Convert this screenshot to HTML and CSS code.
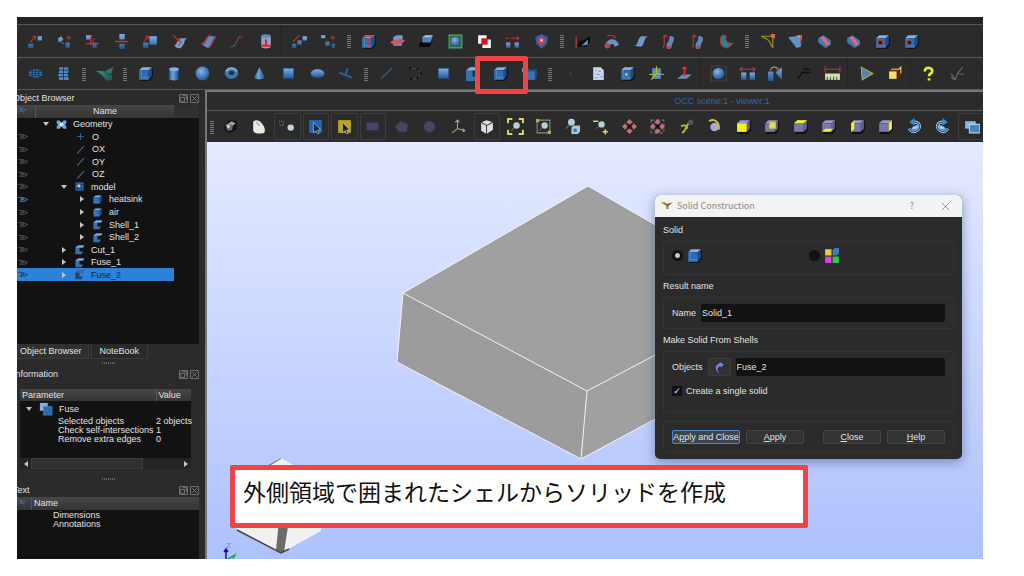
FILE: index.html
```html
<!DOCTYPE html>
<html lang="ja">
<head>
<meta charset="utf-8">
<title>Solid Construction</title>
<link rel="stylesheet" href="styles.css">
</head>
<body>
<svg class="defs" aria-hidden="true">
  <defs>
    <linearGradient id="gb" x1="0" y1="0" x2="0" y2="1"><stop offset="0" stop-color="#7fb0e6"/><stop offset="1" stop-color="#1f5596"/></linearGradient>
    <linearGradient id="gc" x1="0" y1="0" x2="1" y2="0"><stop offset="0" stop-color="#2c64a5"/><stop offset=".4" stop-color="#6ea3dc"/><stop offset="1" stop-color="#1c4880"/></linearGradient>
    <radialGradient id="gs" cx=".4" cy=".35" r=".7"><stop offset="0" stop-color="#86b6ec"/><stop offset="1" stop-color="#1b4f8f"/></radialGradient>
    <linearGradient id="gt" x1="0" y1="0" x2="1" y2="1"><stop offset="0" stop-color="#3f9c8c"/><stop offset="1" stop-color="#175248"/></linearGradient>
  </defs>
  <symbol id="box" viewBox="0 0 16 16"><path d="M3 6l3-3h9v8l-3 4H3z" fill="#0b1420"/><path d="M2 5l3-3h9l-3 3z" fill="#85b2e2"/><path d="M11 5l3-3v8l-3 4z" fill="#1d4c86"/><path d="M2 5h9v9H2z" fill="#2f6db3"/><path d="M4 5v7h7" stroke="#6f9bcd" stroke-width=".6" fill="none"/></symbol>
  <symbol id="cyl" viewBox="0 0 16 16"><path d="M4 4v9c0 2 9 2 9 0V4z" fill="url(#gc)"/><ellipse cx="8.500" cy="4" rx="4.500" ry="1.800" fill="#7fb0e6"/></symbol>
  <symbol id="sph" viewBox="0 0 16 16"><circle cx="8" cy="8" r="6.500" fill="url(#gs)"/></symbol>
  <symbol id="tor" viewBox="0 0 16 16"><ellipse cx="8" cy="7.500" rx="4.500" ry="3.700" fill="none" stroke="#3c74b5" stroke-width="3.800"/><path d="M3 6c2-4 8-4 10 0" fill="none" stroke="#8ab5e4" stroke-width="1.500"/></symbol>
  <symbol id="cone" viewBox="0 0 16 16"><path d="M8 2l5 10c-2 2-8 2-10 0z" fill="url(#gc)"/></symbol>
  <symbol id="rect" viewBox="0 0 16 16"><path d="M3 3h10v10H3z" fill="url(#gb)" stroke="#173f70" stroke-width=".6"/></symbol>
  <symbol id="disk" viewBox="0 0 16 16"><ellipse cx="8" cy="8" rx="6.500" ry="4" fill="url(#gb)"/></symbol>
  <symbol id="tpipe" viewBox="0 0 16 16"><path d="M2 7l12 5M8 10l2-7" stroke="#285d99" stroke-width="2" fill="none"/></symbol>
  <symbol id="line" viewBox="0 0 16 16"><path d="M3 13L13 3" stroke="#315f92" stroke-width="1.200"/></symbol>
  <symbol id="axis" viewBox="0 0 16 16"><path d="M3 14L13 3" stroke="#5b6470" stroke-width="1.500"/></symbol>
  <symbol id="wire" viewBox="0 0 16 16"><path d="M3 3l7 1 3 4-3 4-6 2" stroke="#354f70" fill="none"/><g fill="#0a0a0a"><path d="M2 2h2v2H2zM9 3h2v2H9zM12 7h2v2h-2zM9 11h2v2H9zM3 12h2v2H3z"/></g></symbol>
  <symbol id="mesh" viewBox="0 0 16 16"><ellipse cx="8" cy="8" rx="6.500" ry="4" fill="#3a6fae"/><path d="M1 8h14M3 6h10M3 10h10M5 4v8M8 4v8M11 4v8" stroke="#14263c" stroke-width=".6"/></symbol>
  <symbol id="mesh3" viewBox="0 0 16 16"><path d="M4 2h8l1 3-1 4 1 5H4L3 9l1-4z" fill="#5087c4"/><path d="M3 5h10M3 8h10M3 11h10M8 2v12" stroke="#152a45" stroke-width=".7"/></symbol>
  <symbol id="surf" viewBox="0 0 20 16"><path d="M1 5c3-1 6 1 9 0s5-3 9-4c-3 4-2 8-2 13-3 1-5 1-7-1-2-3-5-6-9-8z" fill="url(#gt)"/><path d="M10 5c1 3 3 4 7 3" stroke="#123c36" fill="none"/></symbol>
  <symbol id="tr1" viewBox="0 0 16 16"><path d="M1 10h5v4H1zM10 3h4v4h-4z" fill="url(#gb)"/><path d="M3 9l5-6M5 3h3v3" stroke="#c4303c" fill="none"/></symbol>
  <symbol id="tr2" viewBox="0 0 16 16"><path d="M2 5l3-2 2 3-3 3-2-1zM9 9h4v5H9z" fill="url(#gb)"/><path d="M12 2v5M9.500 4.500h5" stroke="#c4303c"/><path d="M6 9h1v1H6z" fill="#aaa"/></symbol>
  <symbol id="tr3" viewBox="0 0 16 16"><path d="M2 2h5v4H2zM8 9h4v5H8z" fill="url(#gb)"/><path d="M6 3v8M2 10h12M10 5l-4 6" stroke="#c4303c" fill="none"/></symbol>
  <symbol id="tr4" viewBox="0 0 16 16"><path d="M6 1h5v5H6zM6 10h5v5H6z" fill="url(#gb)"/><path d="M2 8h12" stroke="#c4303c" stroke-width="1.400"/></symbol>
  <symbol id="tr5" viewBox="0 0 16 16"><path d="M1 9h5v5H1zM7 3h7v8H7z" fill="url(#gb)"/><path d="M2 8l4-5M3 3h3v3" stroke="#c4303c" fill="none"/></symbol>
  <symbol id="tr6" viewBox="0 0 16 16"><path d="M3 12c3-1 3-7 6-7h6c-3 1-2 7-6 9-2 1-4 0-6-2z" fill="#7b9ccb"/><path d="M2 2l6 6 1-3M7 12l3-4" stroke="#c4303c" fill="none"/></symbol>
  <symbol id="tr7" viewBox="0 0 16 16"><path d="M2 11c4 0 3-7 7-8h6c-4 1-3 10-8 11z" fill="#5d8bc6"/><path d="M1 10c5 1 4-7 9-8M7 14c5 0 4-8 8-10" stroke="#c4303c" fill="none" stroke-width="1.300"/></symbol>
  <symbol id="curve" viewBox="0 0 16 16"><path d="M2 13c8 0 4-9 12-10" stroke="#46617f" fill="none"/><path d="M8 8c1-4 2-5 6-5" stroke="#8c2630" fill="none"/></symbol>
  <symbol id="cylr" viewBox="0 0 16 16"><path d="M4 3v10c0 2 9 2 9 0V3z" fill="#8da7c4"/><ellipse cx="8.500" cy="3" rx="4.500" ry="1.800" fill="#5f8fc4"/><path d="M4 12h9M8.500 6v7" stroke="#e11f30" stroke-width="2"/></symbol>
  <symbol id="arr1" viewBox="0 0 16 16"><path d="M1 10h4v4H1zM6 7h4v4H6zM11 3h4v4h-4z" fill="url(#gb)"/><path d="M2 8l6-6" stroke="#c4303c"/></symbol>
  <symbol id="arr2" viewBox="0 0 16 16"><path d="M1 2h4v3H1zM5 8h4v4H5zM11 10h3v4h-3z" fill="url(#gb)"/><path d="M12 2v5M9.500 4.500h5" stroke="#c4303c"/></symbol>
  <symbol id="boxr" viewBox="0 0 16 16"><use href="#box"/><path d="M3 5l3-2h7M8 5v9M10 5l3-3" stroke="#b9434a" fill="none" stroke-width="1.300"/></symbol>
  <symbol id="slice" viewBox="0 0 16 16"><path d="M4 4l3-2h6l-1 10H4z" fill="#6e9bd0"/><path d="M1 9c3-3 10-4 14-2-2 4-10 5-14 2z" fill="#d4525a"/></symbol>
  <symbol id="slice2" viewBox="0 0 16 16"><path d="M1 10l3-3h10l-3 6H1z" fill="#060606"/><path d="M4 4l3-2h7l-2 7H4z" fill="#4d82bd"/><path d="M4 4l3-2h7l-2 2z" fill="#9fc3ec"/></symbol>
  <symbol id="green" viewBox="0 0 16 16"><path d="M2 2h12v12H2z" fill="#256b43" stroke="#4faf70"/><circle cx="8" cy="8" r="4.500" fill="url(#gs)"/></symbol>
  <symbol id="common" viewBox="0 0 16 16"><path d="M2 2h8v8H2zM6 6h8v8H6z" fill="#f3f3f5"/><path d="M5 5h6v6H5z" fill="#e01020"/></symbol>
  <symbol id="expl" viewBox="0 0 16 16"><path d="M2 9h4v5H2zM10 9h4v5h-4z" fill="url(#gb)"/><path d="M1 5h4M7 5h7M12 3l2 2-2 2" stroke="#c4303c" fill="none"/></symbol>
  <symbol id="shield" viewBox="0 0 16 16"><path d="M2 4l6-3 6 3-1 6-5 5-5-5z" fill="#2b62b0"/><path d="M5 5l3-2 3 2v4l-3 3-3-3z" fill="#d63d55"/><path d="M7 6h2v2H7z" fill="#fff"/></symbol>
  <symbol id="ext" viewBox="0 0 16 16"><path d="M3 13h8l4-4V3L9 7H5z" fill="#090909"/><path d="M7 12l6-6v5z" fill="#648ec0"/><path d="M2 14V3" stroke="#b93642" stroke-width="1.200"/></symbol>
  <symbol id="rev" viewBox="0 0 16 16"><path d="M2 12C3 5 12 3 15 11l-4 2c-1-4-4-4-5 1z" fill="#7093c0"/><circle cx="4" cy="12" r="2.500" fill="#b9434a"/><path d="M4 3c4-2 6-1 8 2" stroke="#c4303c" fill="none"/></symbol>
  <symbol id="sheet" viewBox="0 0 16 16"><path d="M2 12c4 0 3-8 7-9h6c-4 1-3 9-7 10z" fill="#7394c5"/></symbol>
  <symbol id="pipe" viewBox="0 0 16 16"><path d="M9 3c5-1 5 4 3 6-1 2-1 6-4 6s-2-6 0-7z" fill="#6386b8"/><path d="M3 14c3-4-1-7 2-12M3 4l2-2 2 2" stroke="#b93642" fill="none"/><ellipse cx="9" cy="13.500" rx="2" ry="1.500" fill="#b9434a"/></symbol>
  <symbol id="pie" viewBox="0 0 16 16"><path d="M4 2C0 8 3 14 9 14l5-4-5-1-2-3 1-3z" fill="#2c7f8c" stroke="#a93843"/></symbol>
  <symbol id="fil1" viewBox="0 0 16 16"><path d="M2 3h11v11M3 4c5 1 8 4 9 9" stroke="#a89528" fill="none"/><path d="M11 1h4v4h-3z" fill="#e06a3a"/></symbol>
  <symbol id="fil2" viewBox="0 0 16 16"><path d="M1 4l13-2-1 11-4 1z" fill="#5f91cc"/><path d="M9 2h5v4" fill="#d9a078"/><path d="M13 2v8" stroke="#c4303c"/></symbol>
  <symbol id="fil3" viewBox="0 0 16 16"><path d="M2 5l5-3 7 5v4l-5 3-7-5z" fill="#4379b7"/><path d="M4 4l3-1 6 7-3 2z" fill="#e36b70"/></symbol>
  <symbol id="boxs" viewBox="0 0 16 16"><use href="#box"/><path d="M4 7h4v4H4z" fill="#17212e" stroke="#a83640"/></symbol>
  <symbol id="pt" viewBox="0 0 16 16"><path d="M7 7h2v2H7z" fill="#28496f"/></symbol>
  <symbol id="page" viewBox="0 0 16 16"><path d="M3 2h7l3 3v9H3z" fill="#c7d6ec"/><path d="M5 5h1M8 6h2M6 9h3M10 11h2M5 12h2" stroke="#6e8fc2"/></symbol>
  <symbol id="boxy" viewBox="0 0 16 16"><use href="#box"/><path d="M6 8h2v2H6z" fill="#e4ef52"/></symbol>
  <symbol id="boxa" viewBox="0 0 16 16"><path d="M4 3h8v10H4z" fill="#5c8fc5"/><path d="M8 1v7l7 1M8 8l-5 6M1 9h7" stroke="#b8b52b" fill="none"/></symbol>
  <symbol id="norm" viewBox="0 0 16 16"><path d="M1 13l5-4h9l-5 4z" fill="#5f8fc4"/><path d="M8 11V2M6 4l2-2 2 2" stroke="#d43342" fill="none" stroke-width="1.400"/></symbol>
  <symbol id="sphb" viewBox="0 0 16 16"><path d="M1 1h14v14H1z" fill="none" stroke="#454545"/><circle cx="8" cy="8" r="5.500" fill="url(#gs)"/></symbol>
  <symbol id="dist" viewBox="0 0 16 16"><path d="M2 7h5v7H2zM10 7h5v7h-5z" fill="url(#gb)"/><path d="M1 4h14M3 2L1 4l2 2M13 2l2 2-2 2" stroke="#cf3039" fill="none"/></symbol>
  <symbol id="ang" viewBox="0 0 16 16"><path d="M1 6h5v9H1zM8 7l6-5v12z" fill="url(#gb)"/><path d="M3 5c2-4 5-4 8-1" stroke="#bdbd49" fill="none"/><path d="M10 2l2 3H8z" fill="#d43342"/></symbol>
  <symbol id="cut" viewBox="0 0 16 16"><path d="M2 13l4-6h8M7 4h6" stroke="#111" stroke-width="1.400" fill="none"/></symbol>
  <symbol id="ruler" viewBox="0 0 16 16"><path d="M1 8h14v6H1z" fill="#d2dfad"/><path d="M3 11v3M6 11v3M9 11v3M12 11v3" stroke="#4c5a3a"/><path d="M1 1v6M15 1v6M1 4h14" stroke="#c4303c"/></symbol>
  <symbol id="tri" viewBox="0 0 16 16"><path d="M3 2l11 6-10 6z" fill="#5c83ad" stroke="#a4b348"/></symbol>
  <symbol id="boxye" viewBox="0 0 16 16"><path d="M2 6l3-4h9l-1 8-4 4H2z" fill="#641f1c"/><path d="M2 6h7v7H2z" fill="#eee85a"/><path d="M4 4h7l2-2v6" stroke="#ddd94e" fill="none"/></symbol>
  <symbol id="help" viewBox="0 0 16 16"><path d="M4.500 6c0-5 7.500-4 7 0-.3 2-3 2-3 4.500M8.500 12.500v2" stroke="#f1ec26" stroke-width="2.600" fill="none"/></symbol>
  <symbol id="tool" viewBox="0 0 16 16"><path d="M2 8l4 6 2-6 6 1M8 8l5-6M2 11l3 3" stroke="#6b6b6b" fill="none"/></symbol>
  <symbol id="dump" viewBox="0 0 16 16"><path d="M2 7l5-5 7 1v7l-6 4-5-2z" fill="#111"/><path d="M3 7l6-4 4 2-5 4z" fill="#9aa09e"/><circle cx="7" cy="9" r="3" fill="#66706d"/><circle cx="6" cy="8" r="1.300" fill="#dde"/></symbol>
  <symbol id="mouse" viewBox="0 0 16 16"><path d="M3 4c1-3 6-2 8 1 3 3 4 8 2 9-3 1-9 1-10-2z" fill="#e7e9e3"/><path d="M6 4l3 3" stroke="#999"/></symbol>
  <symbol id="dots" viewBox="0 0 16 16"><path d="M0 3h4v4H0z" fill="none" stroke="#777" stroke-dasharray="1 1"/><circle cx="11" cy="9" r="3" fill="#bfd9da"/></symbol>
  <symbol id="selb" viewBox="0 0 16 16"><path d="M2 2h12v12H2z" fill="#1e69b7"/><path d="M6 4l7 7-3 .3 1.500 3-1.500.7-1.500-3L6 14z" fill="#202437" stroke="#b8b7bd" stroke-width=".7"/></symbol>
  <symbol id="sely" viewBox="0 0 16 16"><path d="M2 2h12v12H2z" fill="#bba51d"/><path d="M6 4l7 7-3 .3 1.500 3-1.500.7-1.500-3L6 14z" fill="#202437" stroke="#c6bfa0" stroke-width=".7"/></symbol>
  <symbol id="prect" viewBox="0 0 16 16"><path d="M2 4h12v8H2z" fill="#474665" stroke="#302f4b"/></symbol>
  <symbol id="ppoly" viewBox="0 0 16 16"><path d="M2 8l5-5 7 3-1 7H5z" fill="#464564"/></symbol>
  <symbol id="pcirc" viewBox="0 0 16 16"><circle cx="8" cy="8" r="5.200" fill="#464564"/></symbol>
  <symbol id="axes" viewBox="0 0 16 16"><path d="M7 2v8l7 2M7 10l-5 4M5 4l2-2 2 2M12 10l2 2-2 1" stroke="#a7a58a" fill="none"/></symbol>
  <symbol id="wbox" viewBox="0 0 16 16"><path d="M3 4l5-2 6 2v7l-6 4-5-3z" fill="#dedede"/><path d="M3 4l5 3 6-3M8 7v8" stroke="#444" fill="none"/></symbol>
  <symbol id="fit" viewBox="0 0 16 16"><path d="M1 5V1h4M11 1h4v4M15 11v4h-4M5 15H1v-4" stroke="#d9d76a" stroke-width="1.800" fill="none"/><path d="M4 12l4-4" stroke="#6a5a45" stroke-width="1.500"/><circle cx="9" cy="7" r="3" fill="#b5cfd4"/></symbol>
  <symbol id="fitr" viewBox="0 0 16 16"><path d="M2 2h12v12H2z" stroke="#8b8b87" fill="none"/><path d="M1 1h3v3H1zM12 12h3v3h-3z" fill="#b9b43c"/><circle cx="9" cy="7" r="3" fill="#b5cfd4"/><path d="M4 12l3-3" stroke="#6a5a45"/></symbol>
  <symbol id="zoomb" viewBox="0 0 16 16"><path d="M2 10l4-5" stroke="#6a5a45" stroke-width="1.500"/><circle cx="7" cy="4" r="3.200" fill="#b5cfd4"/><path d="M7 9l2-2h6v6l-2 2H7z" fill="#a9c8df"/><path d="M9 10h3v3H9z" fill="#3777af"/></symbol>
  <symbol id="zoomp" viewBox="0 0 16 16"><path d="M1 3h5M10 13h5M12.500 10.500v5" stroke="#e0d847" stroke-width="1.500"/><path d="M4 10l5-4" stroke="#6a5a45"/><circle cx="9" cy="6" r="3" fill="#b5cfd4"/></symbol>
  <symbol id="pan" viewBox="0 0 16 16"><path d="M8 1l3 3-3 2-3-2zM8 15l3-3-3-2-3 2zM1 8l3-3 2 3-2 3zM15 8l-3-3-2 3 2 3z" fill="#c4707a"/><path d="M7 7h2v2H7z" fill="#060606"/></symbol>
  <symbol id="panf" viewBox="0 0 16 16"><path d="M2 2h12v12H2z" fill="none" stroke="#777" stroke-dasharray="3 2"/><use href="#pan"/></symbol>
  <symbol id="rotp" viewBox="0 0 16 16"><path d="M4 14c4-2 3-6 6-9M3 8c2-2 5-1 6 2" stroke="#c7ba38" stroke-width="1.800" fill="none"/><circle cx="12" cy="4" r="2.500" fill="#4b5765"/></symbol>
  <symbol id="rot" viewBox="0 0 16 16"><circle cx="8" cy="8.500" r="4" fill="#a7a8da"/><path d="M3 3c5-3 10 1 9 8" stroke="#cec23f" stroke-width="1.800" fill="none"/></symbol>
  <symbol id="cube" viewBox="0 0 16 16"><path d="M3 6l3-3h9v8l-3 4H3z" fill="#111"/><path d="M2 5l3-3h9l-3 3z" fill="#9998cd"/><path d="M11 5l3-3v8l-3 3z" fill="#62618f"/><path d="M2 5h9v8H2z" fill="#7978ab"/></symbol>
  <symbol id="vfront" viewBox="0 0 16 16"><use href="#cube"/><path d="M2 5h9v8H2z" fill="#f4f315"/></symbol>
  <symbol id="vback" viewBox="0 0 16 16"><use href="#cube"/><path d="M6 4h6v6H6z" fill="#e1df3c"/></symbol>
  <symbol id="vtop" viewBox="0 0 16 16"><use href="#cube"/><path d="M2 5l3-3h9l-3 3z" fill="#f4f315"/></symbol>
  <symbol id="vbot" viewBox="0 0 16 16"><use href="#cube"/><path d="M2 13l3-3h7l-2 3z" fill="#f4f315"/></symbol>
  <symbol id="vleft" viewBox="0 0 16 16"><use href="#cube"/><path d="M2 5l3-3v8l-3 3z" fill="#f4f315"/></symbol>
  <symbol id="vright" viewBox="0 0 16 16"><use href="#cube"/><path d="M11 5l3-3v8l-3 3z" fill="#f4f315"/></symbol>
  <symbol id="ccw" viewBox="0 0 16 16"><path d="M6 4c7-1 9 5 4 8-3 2-6 0-7-2M6 9c2 1 4 0 4-2" stroke="#a8cdf1" stroke-width="2.800" fill="none"/><path d="M6 4c7-1 9 5 4 8-3 2-6 0-7-2" stroke="#255a9d" stroke-width="1.300" fill="none"/><path d="M3 4l5-4v7z" fill="#2b91da"/></symbol>
  <symbol id="cw" viewBox="0 0 16 16"><path d="M10 4c-7-1-9 5-4 8 3 2 6 0 7-2M10 9C8 10 6 9 6 7" stroke="#a8cdf1" stroke-width="2.800" fill="none"/><path d="M10 4c-7-1-9 5-4 8 3 2 6 0 7-2" stroke="#255a9d" stroke-width="1.300" fill="none"/><path d="M13 4L8 0v7z" fill="#2b91da"/></symbol>
  <symbol id="clone" viewBox="0 0 16 16"><path d="M2 3h10v7H2z" fill="#86b7e5"/><path d="M6 6h10v8H6z" fill="#4b84c1" stroke="#add1f2"/></symbol>
  <symbol id="geo" viewBox="0 0 16 16"><path d="M1 2h4l3 3 3-3h4v4l-2 2 2 3v3h-4l-3-3-3 3H1v-3l2-3-2-2z" fill="#69acdf"/><circle cx="8" cy="8" r="2.500" fill="#d7edfa"/></symbol>
  <symbol id="plus" viewBox="0 0 16 16"><path d="M8 3v10M3 8h10" stroke="#315f92" stroke-width="1.500"/></symbol>
  <symbol id="model" viewBox="0 0 16 16"><path d="M2 2h12v12H2z" fill="#306fae"/><path d="M1 5h14M1 11h14M5 1v14M11 1v14" stroke="#11355e"/><path d="M5 5h4v4H5z" fill="#9ac7ee"/></symbol>
  <symbol id="shell" viewBox="0 0 16 16"><path d="M2 5l4-3h9l-2 3H8v6h5l-2 4H2z" fill="#3972b4"/><path d="M2 5l4-3h9l-2 3z" fill="#86b2e2"/></symbol>
  <symbol id="comp" viewBox="0 0 16 16"><path d="M1 3h6v4H1z" fill="#6c9ed6"/><path d="M5 6l2-2h8v7l-2 3H5z" fill="#1d4c86"/><path d="M5 6h8v8H5z" fill="#3972b4"/></symbol>
  <symbol id="fuse" viewBox="0 0 16 16"><path d="M1 1h9v9H1z" fill="#83b0e3"/><path d="M5 5h10v10H5z" fill="#2c6bb0" stroke="#528dca" stroke-width=".6"/></symbol>
  <symbol id="eye" viewBox="0 0 16 16"><path d="M1 5c5-1 9 0 14 3-4 3-8 4-12 2M6 5v5" stroke="currentColor" stroke-width="1.500" fill="none"/><circle cx="8" cy="7.500" r="2" fill="currentColor"/></symbol>
  <symbol id="float" viewBox="0 0 16 16"><path d="M1 1h14v14H1zM3 6h7v7H3zM6 3h7v7" fill="none" stroke="currentColor" stroke-width="1.400"/></symbol>
  <symbol id="close" viewBox="0 0 16 16"><path d="M1 1h14v14H1zM4 4l8 8M12 4l-8 8" fill="none" stroke="currentColor" stroke-width="1.400"/></symbol>
  <symbol id="logo" viewBox="0 0 16 16"><path d="M0 3l5 0 3 2 8-2-6 4v5H7V8z" fill="#a88123"/><path d="M8 6l7-2-6 4z" fill="#59491d"/></symbol>
  <symbol id="four" viewBox="0 0 16 16"><path d="M2 2h6v6H2z" fill="#f1ce2d"/><path d="M9 3l2-2h4v5l-2 2H9z" fill="#3a7abe"/><path d="M2 9h6v6H2z" fill="#d642e5"/><path d="M9 9h6v6H9z" fill="#35c44d"/></symbol>
  <symbol id="pick" viewBox="0 0 16 16"><path d="M14 4L9 1 3 6c-1 4 1 7 4 9l1-1C5 10 6 8 9 7l1 2z" fill="#7584cc" stroke="#182454"/></symbol>
</svg>

<main class="app">
  <div class="menu-edge"></div>
  <div class="toolbar" role="toolbar" aria-label="Operations">
    <button class="tb" aria-label="Translation"><svg><use href="#tr1"/></svg></button>
    <button class="tb" aria-label="Rotation"><svg><use href="#tr2"/></svg></button>
    <button class="tb" aria-label="Modify location"><svg><use href="#tr3"/></svg></button>
    <button class="tb" aria-label="Mirror"><svg><use href="#tr4"/></svg></button>
    <button class="tb" aria-label="Scale"><svg><use href="#tr5"/></svg></button>
    <button class="tb" aria-label="Offset"><svg><use href="#tr6"/></svg></button>
    <button class="tb" aria-label="Projection"><svg><use href="#tr7"/></svg></button>
    <button class="tb" aria-label="Curve extension"><svg><use href="#curve"/></svg></button>
    <button class="tb" aria-label="Cylinder projection"><svg><use href="#cylr"/></svg></button>
    <span class="sep"></span>
    <button class="tb" aria-label="Multi-translation"><svg><use href="#arr1"/></svg></button>
    <button class="tb" aria-label="Multi-rotation"><svg><use href="#arr2"/></svg></button>
    <span class="grip"></span>
    <button class="tb" aria-label="Partition"><svg><use href="#boxr"/></svg></button>
    <button class="tb" aria-label="Section"><svg><use href="#slice"/></svg></button>
    <button class="tb" aria-label="Archimede"><svg><use href="#slice2"/></svg></button>
    <button class="tb" aria-label="Shapes on shape"><svg><use href="#green"/></svg></button>
    <button class="tb" aria-label="Common"><svg><use href="#common"/></svg></button>
    <button class="tb" aria-label="Transfer"><svg><use href="#expl"/></svg></button>
    <button class="tb" aria-label="Shared shapes"><svg><use href="#shield"/></svg></button>
    <span class="grip"></span>
    <button class="tb" aria-label="Extrusion"><svg><use href="#ext"/></svg></button>
    <button class="tb" aria-label="Revolution"><svg><use href="#rev"/></svg></button>
    <button class="tb" aria-label="Filling"><svg><use href="#sheet"/></svg></button>
    <button class="tb" aria-label="Pipe"><svg><use href="#pipe"/></svg></button>
    <button class="tb" aria-label="Path"><svg><use href="#pipe"/></svg></button>
    <button class="tb" aria-label="Thickness"><svg><use href="#pie"/></svg></button>
    <span class="grip"></span>
    <button class="tb" aria-label="Fillet 1D"><svg><use href="#fil1"/></svg></button>
    <button class="tb" aria-label="Fillet 2D"><svg><use href="#fil2"/></svg></button>
    <button class="tb" aria-label="Fillet 3D"><svg><use href="#fil3"/></svg></button>
    <button class="tb" aria-label="Chamfer"><svg><use href="#fil3"/></svg></button>
    <button class="tb" aria-label="Extruded boss"><svg><use href="#boxs"/></svg></button>
    <button class="tb" aria-label="Extruded cut"><svg><use href="#boxs"/></svg></button>
    <span class="rest"></span>
  </div>
  <div class="toolbar second" role="toolbar" aria-label="Primitives">
    <button class="tb" aria-label="Mesh disk"><svg><use href="#mesh"/></svg></button>
    <button class="tb" aria-label="Mesh pipe"><svg><use href="#mesh3"/></svg></button>
    <span class="grip"></span>
    <button class="tb wide" aria-label="Smoothing surface"><svg><use href="#surf"/></svg></button>
    <span class="grip"></span>
    <button class="tb" aria-label="Box"><svg><use href="#box"/></svg></button>
    <button class="tb" aria-label="Cylinder"><svg><use href="#cyl"/></svg></button>
    <button class="tb" aria-label="Sphere"><svg><use href="#sph"/></svg></button>
    <button class="tb" aria-label="Torus"><svg><use href="#tor"/></svg></button>
    <button class="tb" aria-label="Cone"><svg><use href="#cone"/></svg></button>
    <button class="tb" aria-label="Rectangle"><svg><use href="#rect"/></svg></button>
    <button class="tb" aria-label="Disk"><svg><use href="#disk"/></svg></button>
    <button class="tb" aria-label="Pipe T-shape"><svg><use href="#tpipe"/></svg></button>
    <span class="grip"></span>
    <button class="tb" aria-label="Edge"><svg><use href="#line"/></svg></button>
    <button class="tb" aria-label="Wire"><svg><use href="#wire"/></svg></button>
    <button class="tb" aria-label="Face"><svg><use href="#rect"/></svg></button>
    <button class="tb" aria-label="Shell"><svg><use href="#shell"/></svg></button>
    <button class="tb marked" aria-label="Build solid"><svg><use href="#box"/></svg></button>
    <button class="tb" aria-label="Compound"><svg><use href="#comp"/></svg></button>
    <span class="grip"></span>
    <button class="tb" aria-label="Point"><svg><use href="#pt"/></svg></button>
    <button class="tb" aria-label="Properties"><svg><use href="#page"/></svg></button>
    <button class="tb" aria-label="Center of mass"><svg><use href="#boxy"/></svg></button>
    <button class="tb" aria-label="Inertia"><svg><use href="#boxa"/></svg></button>
    <button class="tb" aria-label="Normal"><svg><use href="#norm"/></svg></button>
    <span class="sep"></span>
    <button class="tb" aria-label="Bounding box"><svg><use href="#sphb"/></svg></button>
    <button class="tb" aria-label="Minimum distance"><svg><use href="#dist"/></svg></button>
    <button class="tb" aria-label="Angle"><svg><use href="#ang"/></svg></button>
    <button class="tb" aria-label="Annotation"><svg><use href="#cut"/></svg></button>
    <button class="tb" aria-label="Dimensions"><svg><use href="#ruler"/></svg></button>
    <span class="sep"></span>
    <button class="tb" aria-label="Tolerance"><svg><use href="#tri"/></svg></button>
    <button class="tb" aria-label="Free boundaries"><svg><use href="#boxye"/></svg></button>
    <span class="sep"></span>
    <button class="tb" aria-label="What is"><svg><use href="#help"/></svg></button>
    <button class="tb" aria-label="Check shape"><svg><use href="#tool"/></svg></button>
    <span class="cutoff"><svg><use href="#line"/></svg></span>
  </div>

  <div class="work">
    <aside class="side">
      <section class="dock browser">
        <h2 class="dock-title"><span class="clip">Object Browser</span><button aria-label="Float"><svg><use href="#float"/></svg></button><button aria-label="Close panel"><svg><use href="#close"/></svg></button></h2>
        <div class="tree-head"><span class="eye on"><svg><use href="#eye"/></svg></span><span class="name">Name</span><span class="blank"></span></div>
        <div class="tree-body">
          <ul class="tree">
            <li class="l0"><i class="ar down"></i><svg><use href="#geo"/></svg>Geometry</li>
            <li class="l2"><svg class="eye"><use href="#eye"/></svg><svg><use href="#plus"/></svg>O</li>
            <li class="l2"><svg class="eye"><use href="#eye"/></svg><svg><use href="#axis"/></svg>OX</li>
            <li class="l2"><svg class="eye"><use href="#eye"/></svg><svg><use href="#axis"/></svg>OY</li>
            <li class="l2"><svg class="eye"><use href="#eye"/></svg><svg><use href="#axis"/></svg>OZ</li>
            <li class="l1"><svg class="eye"><use href="#eye"/></svg><i class="ar down"></i><svg><use href="#model"/></svg>model</li>
            <li class="l3"><svg class="eye on"><use href="#eye"/></svg><i class="ar"></i><svg><use href="#box"/></svg>heatsink</li>
            <li class="l3"><svg class="eye"><use href="#eye"/></svg><i class="ar"></i><svg><use href="#box"/></svg>air</li>
            <li class="l3"><svg class="eye"><use href="#eye"/></svg><i class="ar"></i><svg><use href="#shell"/></svg>Shell_1</li>
            <li class="l3"><svg class="eye"><use href="#eye"/></svg><i class="ar"></i><svg><use href="#shell"/></svg>Shell_2</li>
            <li class="l1"><svg class="eye"><use href="#eye"/></svg><i class="ar"></i><svg><use href="#shell"/></svg>Cut_1</li>
            <li class="l1"><svg class="eye"><use href="#eye"/></svg><i class="ar"></i><svg><use href="#shell"/></svg>Fuse_1</li>
            <li class="l1 sel"><svg class="eye on"><use href="#eye"/></svg><i class="ar"></i><svg class="picked"><use href="#shell"/></svg>Fuse_2</li>
          </ul>
        </div>
        <div class="tabs"><button class="tab active">Object Browser</button><button class="tab">NoteBook</button></div>
      </section>
      <div class="handle"></div>
      <section class="dock info">
        <h2 class="dock-title"><span class="clip">Information</span><button aria-label="Float"><svg><use href="#float"/></svg></button><button aria-label="Close panel"><svg><use href="#close"/></svg></button></h2>
        <div class="info-box">
          <table>
            <thead><tr><th class="param">Parameter</th><th>Value</th></tr></thead>
            <tbody>
              <tr class="group"><td colspan="2"><div class="fuse"><i class="ar down"></i><svg><use href="#fuse"/></svg>Fuse</div></td></tr>
              <tr><td>Selected objects</td><td>2 objects</td></tr>
              <tr><td>Check self-intersections</td><td>1</td></tr>
              <tr><td>Remove extra edges</td><td>0</td></tr>
            </tbody>
          </table>
          <div class="scroll"><button aria-label="Scroll left"><i class="ar left"></i></button><span class="thumb"></span><button aria-label="Scroll right"><i class="ar"></i></button></div>
        </div>
      </section>
      <div class="handle"></div>
      <section class="dock text">
        <h2 class="dock-title"><span class="clip">Text</span><button aria-label="Float"><svg><use href="#float"/></svg></button><button aria-label="Close panel"><svg><use href="#close"/></svg></button></h2>
        <div class="tree-head"><span class="eye on narrow"><svg><use href="#eye"/></svg></span><span class="name left">Name</span></div>
        <ul class="notes"><li>Dimensions</li><li>Annotations</li></ul>
      </section>
    </aside>

    <section class="viewer">
      <h1 class="viewer-title">OCC scene:1 - viewer:1</h1>
      <div class="toolbar view" role="toolbar" aria-label="View operations">
        <span class="grip"></span>
        <button class="tb" aria-label="Dump view"><svg><use href="#dump"/></svg></button>
        <button class="tb" aria-label="Interaction style"><svg><use href="#mouse"/></svg></button>
        <button class="tb on" aria-label="Preselection"><svg><use href="#dots"/></svg></button>
        <button class="tb on" aria-label="Selection"><svg><use href="#selb"/></svg></button>
        <button class="tb on" aria-label="Highlight selection"><svg><use href="#sely"/></svg></button>
        <button class="tb on" aria-label="Rectangle selection"><svg><use href="#prect"/></svg></button>
        <button class="tb" aria-label="Polygon selection"><svg><use href="#ppoly"/></svg></button>
        <button class="tb" aria-label="Circle selection"><svg><use href="#pcirc"/></svg></button>
        <button class="tb" aria-label="Show trihedron"><svg><use href="#axes"/></svg></button>
        <button class="tb on" aria-label="View cube"><svg><use href="#wbox"/></svg></button>
        <button class="tb" aria-label="Fit all"><svg><use href="#fit"/></svg></button>
        <button class="tb" aria-label="Fit area"><svg><use href="#fitr"/></svg></button>
        <button class="tb" aria-label="Fit selection"><svg><use href="#zoomb"/></svg></button>
        <button class="tb" aria-label="Zoom"><svg><use href="#zoomp"/></svg></button>
        <button class="tb" aria-label="Pan"><svg><use href="#pan"/></svg></button>
        <button class="tb" aria-label="Global pan"><svg><use href="#panf"/></svg></button>
        <button class="tb" aria-label="Rotation point"><svg><use href="#rotp"/></svg></button>
        <button class="tb" aria-label="Rotate"><svg><use href="#rot"/></svg></button>
        <button class="tb" aria-label="Front"><svg><use href="#vfront"/></svg></button>
        <button class="tb" aria-label="Back"><svg><use href="#vback"/></svg></button>
        <button class="tb" aria-label="Top"><svg><use href="#vtop"/></svg></button>
        <button class="tb" aria-label="Bottom"><svg><use href="#vbot"/></svg></button>
        <button class="tb" aria-label="Left"><svg><use href="#vleft"/></svg></button>
        <button class="tb" aria-label="Right"><svg><use href="#vright"/></svg></button>
        <button class="tb" aria-label="Rotate counterclockwise"><svg><use href="#ccw"/></svg></button>
        <button class="tb" aria-label="Rotate clockwise"><svg><use href="#cw"/></svg></button>
        <button class="tb on last" aria-label="Clone view"><svg><use href="#clone"/></svg></button>
      </div>
      <div class="scene">
        <svg class="model" viewBox="207 142 776 417" preserveAspectRatio="xMinYMin slice" role="img" aria-label="Solid box">
          <path d="M588 186L403 293l-6 69 184 97 180-97 12-69z" fill="#a0a0a0"/>
          <path d="M403 293l184 98-6 68-184-97z" fill="#9c9c9c"/>
          <path d="M773 293L588 186 403 293l-6 69 184 97 180-97M403 293l184 98 186-98M587 391l-6 68" fill="none" stroke="#f4f4f4"/>
          <path d="M281 458l-44 24v48l44 23 40-22v-50z" fill="#f1f1f1"/>
          <path d="M281 458l-44 24v3l44-26z" fill="#777"/>
          <path d="M279 520h10l-5 32-3 1-5-3z" fill="#6b6b6b"/>
          <path d="M237 530l44 23 8-4" fill="none" stroke="#444" stroke-width="1.500"/>
          <path d="M226 559v-9M224 552l2-3 2 3" stroke="#1010a8" stroke-width="1.500" fill="none"/>
          <path d="M228 559l7-4-2 4" stroke="#19ad50" stroke-width="1.500" fill="none"/>
          <text x="226" y="548" class="az">Z</text><text x="236" y="554" class="ay">Y</text>
        </svg>

        <form class="dialog" aria-labelledby="dlg">
          <header><svg><use href="#logo"/></svg><h2 id="dlg">Solid Construction</h2><button type="button">?</button><button type="button" aria-label="Close dialog"><svg viewBox="0 0 10 10"><path d="M1 1l8 8M9 1L1 9" stroke="#888" fill="none"/></svg></button></header>
          <div class="dlg-body">
            <fieldset>
              <legend>Solid</legend>
              <div class="frame radios">
                <label><input type="radio" name="mode" checked aria-label="Solid from shells"><svg><use href="#box"/></svg></label>
                <label><input type="radio" name="mode" aria-label="Solid from parts"><svg><use href="#four"/></svg></label>
              </div>
            </fieldset>
            <fieldset>
              <legend>Result name</legend>
              <div class="frame one"><div class="field"><label for="name">Name</label><input id="name" type="text" value="Solid_1"></div></div>
            </fieldset>
            <fieldset>
              <legend>Make Solid From Shells</legend>
              <div class="frame two">
                <div class="field"><label for="objs">Objects</label><button type="button" class="pick" aria-label="Select objects"><svg><use href="#pick"/></svg></button><input id="objs" type="text" value="Fuse_2"></div>
                <label class="check"><input type="checkbox" checked>Create a single solid</label>
              </div>
            </fieldset>
            <div class="frame actions">
              <button type="button" class="primary">A<u>p</u>ply and Close</button><button type="button"><u>A</u>pply</button><span></span><button type="button"><u>C</u>lose</button><button type="button"><u>H</u>elp</button>
            </div>
          </div>
        </form>

        <p class="callout">外側領域で囲まれたシェルからソリッドを作成</p>
      </div>
    </section>
  </div>
</main>
</body>
</html>
```
FILE: styles.css
```css
* { box-sizing: border-box; }
html, body { height: 100%; margin: 0; }
body {
  display: flex;
  padding: 17px 41px 17px 17px;
  background: #fff;
  color: #e2e2e2;
  font: 9px/12px "Liberation Sans", "Noto Sans CJK JP", sans-serif;
}
.defs { position: absolute; width: 0; height: 0; }
button { margin: 0; padding: 0; border: 0; background: none; color: inherit; font: inherit; }
input { font: inherit; color: inherit; }
h1, h2, p, ul { margin: 0; padding: 0; font-size: inherit; font-weight: 400; list-style: none; }

.app { flex: 1; min-width: 0; display: flex; flex-direction: column; overflow: hidden; background: #2b2b2b; }
.menu-edge { height: 7px; background: #252525; }

.toolbar { display: flex; align-items: stretch; height: 33px; padding-left: 4px; border-top: 1px solid #585858; background: #2b2b2b; }
.toolbar.second { height: 32px; }
.tb { flex: 1 1 0; min-width: 0; display: flex; align-items: center; justify-content: center; position: relative; }
.tb svg { width: 17px; height: 17px; flex: none; }
.tb.wide svg { width: 20px; height: 16px; }
.sep { width: 5px; border-left: 1px solid #252525; }
.grip { width: 12px; display: flex; align-items: center; justify-content: center; }
.grip::before { content: ""; width: 4px; height: 14px; background: repeating-linear-gradient(#2b2b2b 0 1px, #777 1px 2px); }
.rest { flex: 2 1 0; }
.cutoff { width: 11px; overflow: hidden; display: flex; align-items: center; padding-left: 8px; }
.cutoff svg { width: 15px; height: 15px; flex: none; }
.marked::after { content: ""; position: absolute; z-index: 3; inset: -2px -13px -5px -12px; border: 5px solid #f04444; border-radius: 2px; }

.work { flex: 1; min-height: 0; display: grid; grid-template-columns: 188px 1fr; grid-template-rows: minmax(0, 1fr); border-top: 1px solid #585858; }
.side { display: flex; flex-direction: column; min-width: 0; min-height: 0; padding-right: 6px; }
.dock-title { display: flex; align-items: center; gap: 2px; height: 14px; flex: none; }
.clip { flex: 1; margin-left: -4px; }
.dock-title button { display: flex; color: #858585; }
.dock-title svg { width: 9px; height: 9px; }
.browser { flex: 0 0 269px; display: flex; flex-direction: column; padding-top: 1px; }
.tree-head { display: flex; height: 13px; flex: none; background: linear-gradient(#474747, #343434); }
.tree-head .eye { width: 19px; border-right: 1px solid #555; }
.tree-head .narrow { width: 15px; }
.tree-head .name { flex: 1; text-align: center; }
.tree-head .name.left { text-align: left; padding-left: 2px; }
.tree-head .blank { width: 25px; background: #303030; }
.eye { color: #474747; }
.eye.on { color: #426c9c; }
.eye svg, svg.eye { width: 9px; height: 10px; }
.tree-body { flex: 1; background: #121212; }
.tree { display: grid; grid-auto-rows: 1fr; height: 163px; margin-right: 25px; }
.tree li { display: flex; align-items: center; gap: 6px; position: relative; white-space: nowrap; line-height: 12px; }
.tree li > svg { width: 11px; height: 11px; flex: none; }
.tree li > svg.eye { position: absolute; left: 0; }
.l0 { padding-left: 25px; }
.l1 { padding-left: 43px; }
.l2 { padding-left: 58px; }
.l3 { padding-left: 61px; }
.ar { flex: none; width: 8px; height: 8px; display: flex; align-items: center; justify-content: center; }
.ar::before { content: ""; border: 3px solid transparent; border-left: 4px solid #c4c4c4; border-right: 0; }
.ar.down::before { border: 3px solid transparent; border-top: 4px solid #c4c4c4; border-bottom: 0; }
.ar.left::before { border: 3px solid transparent; border-right: 4px solid #c4c4c4; border-left: 0; }
.tree .sel { background: #2a82da; color: #17253a; }
.tree .sel .eye { color: #1c4f86; }
.picked { filter: brightness(.6); }
.tabs { display: flex; gap: 2px; height: 15px; }
.tab { height: 15px; padding: 0 8px; border: 1px solid #3a3a3a; border-top: 0; background: #292929; }
.tab.active { padding: 0 6px 0 3px; background: #303030; border-left: 0; }
.handle { display: flex; justify-content: center; align-items: center; height: 8px; flex: none; }
.handle::before { content: ""; width: 13px; height: 2px; background: repeating-linear-gradient(90deg, #666 0 1px, #2b2b2b 1px 2px); }

.info { flex: 0 0 108px; }
.info-box { margin: 8px 8px 0 3px; background: #121212; line-height: 9px; }
.info table { width: 100%; border-collapse: collapse; table-layout: fixed; margin-bottom: 14px; }
.info th, .info td { padding: 0; text-align: left; font-weight: 400; white-space: nowrap; height: 9px; }
.info th { height: 12px; padding-left: 2px; background: linear-gradient(#474747, #343434); }
.info .param { width: 136px; border-right: 1px solid #5a5a5a; }
.info tbody td:first-child { padding-left: 38px; }
.info tbody .group td { height: 16px; padding-left: 5px; }
.fuse { display: flex; align-items: center; gap: 6px; }
.fuse svg { width: 14px; height: 14px; }
.scroll { display: flex; height: 11px; background: #242424; }
.scroll button { width: 11px; display: flex; align-items: center; justify-content: center; }
.thumb { width: 112px; background: #303030; border: 1px solid #3c3c3c; margin-right: auto; }

.text { flex: 1; display: flex; flex-direction: column; }
.notes { flex: 1; padding: 1px 0 0 36px; background: #121212; line-height: 9px; }

.viewer { display: flex; flex-direction: column; min-width: 0; min-height: 0; border-left: 2px solid #777; border-top: 2px solid #777; }
.viewer-title { height: 18px; flex: none; line-height: 18px; text-align: center; padding-left: 254px; color: #2869ab; }
.toolbar.view { height: 32px; flex: none; padding: 0; overflow: hidden; }
.view .grip { width: 9px; }
.view .on::before { content: ""; position: absolute; inset: 2px 1px; border: 1px solid #3d3d3d; border-radius: 2px; }
.view .last { flex: .7 1 0; justify-content: flex-start; padding-left: 6px; overflow: hidden; }
.view .last::before { border-right: 0; right: 0; }
.scene { flex: 1; min-height: 0; position: relative; overflow: hidden; background: linear-gradient(#e5eaff, #adc1fd); }
.model { display: block; width: 100%; height: 100%; }
.az, .ay { font: 8px "Liberation Sans", sans-serif; fill: #7488dd; }
.ay { fill: #88ddc0; }

.dialog { position: absolute; top: 53px; right: 21px; width: 307px; overflow: hidden; border-radius: 5px; background: #2b2b2b; box-shadow: 0 3px 12px #4a5a8899; }
.dialog header { display: flex; align-items: center; height: 22px; padding: 0 12px 0 6px; background: #f3f3f3; color: #8a8a8a; font: 9px/12px "Noto Sans CJK JP", "Open Sans", sans-serif; }
.dialog header svg { width: 12px; height: 12px; }
.dialog header h2 { flex: 1; padding-left: 4px; }
.dialog header button { width: 10px; margin-left: 23px; display: flex; justify-content: center; }
.dialog header button svg { width: 9px; height: 9px; }
.dlg-body { padding: 7px 8px; }
fieldset { margin: 0 0 5px; padding: 0; border: 0; min-width: 0; }
legend { padding: 0; line-height: 12px; }
.frame { margin-top: 5px; padding: 0 8px; border: 1px solid #343434; border-radius: 2px; }
.radios { display: grid; grid-template-columns: 1fr 1fr; height: 34px; align-items: start; padding-top: 5px; }
.radios label { display: flex; align-items: center; gap: 3px; }
.radios svg { width: 17px; height: 17px; }
.radios input { appearance: none; width: 11px; height: 11px; margin: 0; border-radius: 50%; border: 3px solid #121212; background: #121212; }
.radios input:checked { background: #c8c8c8; }
.one { display: flex; align-items: center; height: 32px; }
.two { height: 62px; padding-top: 6px; }
.field { flex: 1; display: flex; align-items: center; gap: 5px; }
.field input { flex: 1; min-width: 0; height: 18px; padding: 0 1px; border: 0; border-radius: 2px; background: #121212; }
.pick { width: 23px; height: 18px; display: flex; align-items: center; justify-content: center; border: 1px solid #3d3d3d; border-radius: 2px; background: #333; }
.pick svg { width: 13px; height: 13px; }
.check { display: flex; align-items: center; gap: 4px; margin-top: 9px; }
.check input { appearance: none; width: 10px; height: 10px; margin: 0; background: #121212; display: flex; align-items: center; justify-content: center; }
.check input:checked::before { content: "✓"; font: bold 9px "DejaVu Sans", sans-serif; }
.actions { display: grid; grid-template-columns: 68px 58px 1fr 58px 58px; column-gap: 6px; align-items: center; height: 31px; margin-top: 8px; }
.actions button { height: 14px; line-height: 12px; border: 1px solid #444; border-radius: 2px; background: #333; }
.actions .primary { border-color: #4f86c2; background: #3b4550; white-space: nowrap; }

.callout { position: absolute; left: 23px; bottom: 31px; width: 578px; height: 63px; padding: 4px 8px; border: 5px solid #f04444; border-radius: 2px; background: #fff; color: #111; font: 23px/34px "Noto Sans CJK JP", sans-serif; white-space: nowrap; }
```
